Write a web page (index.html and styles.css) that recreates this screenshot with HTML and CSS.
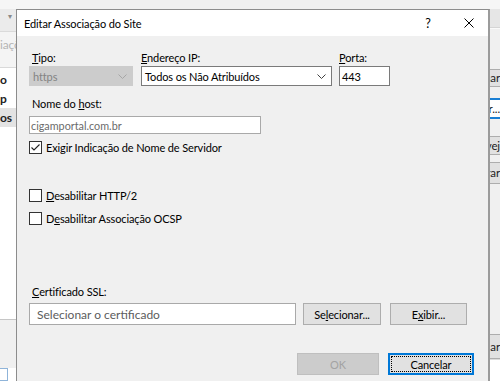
FILE: index.html
```html
<!DOCTYPE html>
<html lang="pt-BR">
<head>
<meta charset="utf-8">
<title>Editar Associação do Site</title>
<link rel="stylesheet" href="styles.css">
</head>
<body>
<div class="page">
  <div class="bg-left">
    <div class="bg-top"></div>
    <div class="bg-toolbar"><span class="bg-caret">▾</span></div>
    <div class="bg-tabs"><span class="bg-faded">iações</span></div>
    <div class="bg-list">
      <div class="bg-item">o</div>
      <div class="bg-item">p</div>
      <div class="bg-item sel">os</div>
    </div>
    <div class="bg-foot"></div>
    <div class="bg-icon"></div>
  </div>
  <div class="bg-right">
    <div class="bg-top"></div>
    <div class="r-toolbar"></div>
    <div class="r-panel">
      <div class="r-btn first">nar</div>
      <div class="r-btn focus">r...</div>
      <div class="r-btn third">vej</div>
      <div class="r-btn fourth">rar</div>
      <div class="r-btn last">ar</div>
      <div class="r-white"></div>
    </div>
  </div>
</div>

<div class="dialog">
  <div class="titlebar">
    <span class="title">Editar Associação do Site</span>
    <span class="help">?</span>
    <span class="close">
      <svg width="10" height="10" viewBox="0 0 10 10"><path d="M0.5 0.5 L9.5 9.5 M9.5 0.5 L0.5 9.5" stroke="#000" stroke-width="1" fill="none"/></svg>
    </span>
  </div>
  <div class="body">
    <div class="row-fields">
      <div class="col col-tipo">
        <div class="label indent"><u>T</u>ipo:</div>
        <div class="field select disabled">
          <span class="val">https</span>
          <svg class="chev" width="9" height="5" viewBox="0 0 9 5"><path d="M0.5 0.5 L4.5 4.5 L8.5 0.5" stroke="#a6a6a6" stroke-width="1" fill="none"/></svg>
        </div>
      </div>
      <div class="col col-ip">
        <div class="label"><u>E</u>ndereço IP:</div>
        <div class="field select">
          <span class="val">Todos os Não Atribuídos</span>
          <svg class="chev" width="9" height="5" viewBox="0 0 9 5"><path d="M0.5 0.5 L4.5 4.5 L8.5 0.5" stroke="#404040" stroke-width="1" fill="none"/></svg>
        </div>
      </div>
      <div class="col col-porta">
        <div class="label"><u>P</u>orta:</div>
        <div class="field input"><span class="val">443</span></div>
      </div>
    </div>

    <div class="label indent host-label">Nome do <u>h</u>ost:</div>
    <div class="field host"><span class="val">cigamportal.com.br</span></div>

    <div class="check-row cb1">
      <span class="box"><svg width="11" height="11" viewBox="0 0 11 11"><path d="M1.5 5.5 L4 8 L9.5 2.5" stroke="#222" stroke-width="1.1" fill="none"/></svg></span>
      <span class="check-text">Exigir Indicação de Nome de Servidor</span>
    </div>
    <div class="check-row cb2">
      <span class="box"></span>
      <span class="check-text"><u>D</u>esabilitar HTTP/2</span>
    </div>
    <div class="check-row cb3">
      <span class="box"></span>
      <span class="check-text">D<u>e</u>sabilitar Associação OCSP</span>
    </div>

    <div class="label indent cert-label"><u>C</u>ertificado SSL:</div>
    <div class="cert-row">
      <div class="field cert"><span class="val">Selecionar o certificado</span></div>
      <div class="btn sel-btn">Se<u>l</u>ecionar...</div>
      <div class="btn view-btn">E<u>x</u>ibir...</div>
    </div>

    <div class="action-row">
      <div class="btn ok-btn">OK</div>
      <div class="btn cancel-btn">Cancelar</div>
    </div>
  </div>
</div>
</body>
</html>
```

FILE: styles.css
```css
* { box-sizing: border-box; }
html, body { margin: 0; padding: 0; }
body {
  width: 500px;
  height: 381px;
  overflow: hidden;
  position: relative;
  font-family: "Lato", "Noto Sans", sans-serif;
  font-size: 11px;
  letter-spacing: -0.12px;
  color: #000;
  background: #f0f0f0;
}

/* background application (mostly hidden by the dialog) */
.page {
  display: flex;
  justify-content: space-between;
  width: 500px;
  height: 381px;
}
.bg-left {
  width: 40px;
  display: flex;
  flex-direction: column;
  background: #fff;
}
.bg-top { height: 9px; background: #f6f6f6; flex: none; }
.bg-toolbar {
  height: 23px;
  flex: none;
  background: #ebebeb;
  border-bottom: 1px solid #dadada;
  padding-left: 8px;
  color: #8a8a8a;
  font-size: 8px;
  line-height: 14px;
}
.bg-tabs {
  height: 36px;
  flex: none;
  background: #f4f4f4;
  border-bottom: 1px solid #d9d9d9;
  color: #b5b5b5;
  padding-top: 5px;
  font-size: 12px;
  white-space: nowrap;
}
.bg-list {
  height: 251px;
  flex: none;
  background: #fff;
  padding-top: 2px;
}
.bg-item {
  height: 19px;
  line-height: 19px;
  font-size: 12px;
  font-weight: 700;
  color: #222;
  white-space: nowrap;
}
.bg-item.sel { background: #e3e3e3; }
.bg-foot {
  height: 49px;
  flex: none;
  background: #f0f0f0;
  border-top: 1px solid #c6c6c6;
}
.bg-icon {
  flex: 1;
  width: 8px;
  background: #fff;
  border: 1px solid #8fb4d9;
  border-left: none;
}

.bg-right {
  width: 40px;
  display: flex;
  flex-direction: column;
}
.r-toolbar {
  height: 19px;
  flex: none;
  background: #e6e6e6;
  border-bottom: 1px solid #d5d5d5;
}
.r-panel {
  flex: 1;
  display: flex;
  flex-direction: column;
  background: #f0f0f0;
  border-top: 1px solid #fafafa;
}
.r-btn {
  flex: none;
  background: #e1e1e1;
  border: 1px solid #adadad;
  border-right: none;
  font-size: 11.5px;
  white-space: nowrap;
  text-align: right;
  color: #222;
}
.r-btn.first { margin-top: 40px; height: 18px; line-height: 16px; }
.r-btn.focus {
  margin-top: 11px; height: 21px; line-height: 17px;
  background: #fff;
  border: 2px solid #1a7fd4;
  border-right: none;
}
.r-btn.third { margin-top: 17px; height: 19px; line-height: 17px; }
.r-btn.fourth { margin-top: 7px; height: 22px; line-height: 20px; }
.r-btn.last { margin-top: 150px; height: 25px; line-height: 23px; }
.r-white { flex: 1; background: #fff; border-top: 1px solid #dcdcdc; }

/* dialog window */
.dialog {
  position: absolute;
  left: 16px;
  top: 9px;
  width: 474px;
  height: 380px;
  background: #f0f0f0;
  border: 1px solid #8c8c8c;
  border-right: 2px solid #9b9b9b;
  border-bottom: none;
}
.titlebar {
  height: 26px;
  background: #fff;
  display: flex;
  align-items: center;
  padding-left: 7px;
}
.title { flex: 1; white-space: nowrap; }
.help {
  width: 44px;
  text-align: center;
  font-size: 12.5px;
}
.close {
  width: 38px;
  display: flex;
  justify-content: center;
  align-items: center;
}
.close svg { display: block; }

.body { padding: 15px 0 0 12px; }

.label {
  height: 14px;
  line-height: 14px;
  white-space: nowrap;
}
.label.indent { padding-left: 3px; }

.row-fields { display: flex; }
.col-tipo { width: 104px; margin-right: 8px; }
.col-ip { width: 191px; margin-right: 7px; }
.col-porta { width: 51px; }
.col .label { margin-bottom: 1px; }

.field {
  height: 20px;
  background: #fff;
  border: 1px solid #7a7a7a;
  display: flex;
  align-items: center;
  white-space: nowrap;
  overflow: hidden;
}
.field .val { padding-left: 3px; flex: 1; }
.select .chev { margin-right: 5px; flex: none; }
.select.disabled {
  background: #cccccc;
  border-color: #cccccc;
  color: #838383;
}
.input .val { padding-left: 2px; }

.host-label { margin-top: 11px; }
.field.host {
  margin-top: 5px;
  width: 232px;
  height: 18px;
  border-color: #a9a9a9;
  color: #6a6a6a;
  font-size: 10.8px;
  letter-spacing: 0;
}
.field.host .val { padding-left: 1px; }

.check-row {
  display: flex;
  align-items: center;
  height: 13px;
  white-space: nowrap;
}
.cb1 { margin-top: 7px; }
.cb2 { margin-top: 35px; }
.cb3 { margin-top: 10px; }
.box {
  width: 13px;
  height: 13px;
  flex: none;
  background: #fff;
  border: 1px solid #333;
  display: flex;
  align-items: center;
  justify-content: center;
}
.box svg { display: block; }
.check-text { margin-left: 4px; }

.cert-label { margin-top: 60px; }
.cert-row { display: flex; margin-top: 4px; }
.field.cert {
  width: 267px;
  height: 22px;
  border-color: #a9a9a9;
  color: #5c5c5c;
  font-size: 12px;
  letter-spacing: 0;
}
.field.cert .val { padding-left: 7px; }

.btn {
  height: 22px;
  background: #e1e1e1;
  border: 1px solid #adadad;
  display: flex;
  align-items: center;
  justify-content: center;
  white-space: nowrap;
}
.sel-btn { width: 78px; margin-left: 7px; }
.view-btn { width: 77px; margin-left: 9px; }

.action-row {
  display: flex;
  margin-top: 28px;
  padding-left: 268px;
}
.ok-btn {
  width: 82px;
  background: #cccccc;
  border-color: #bfbfbf;
  color: #a3a3a3;
}
.cancel-btn {
  width: 86px;
  margin-left: 9px;
  border: 2px solid #0078d7;
  outline: 1px dotted #000;
  outline-offset: -4px;
}
```
